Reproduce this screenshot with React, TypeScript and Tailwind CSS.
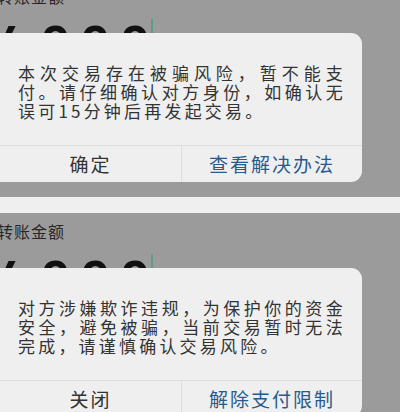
import React from 'react';

type Notice = {
  lines: string[];
  cancel: string;
  action: string;
};

const notices: Notice[] = [
  {
    lines: ['本次交易存在被骗风险，暂不能支', '付。请仔细确认对方身份，如确认无', '误可15分钟后再发起交易。'],
    cancel: '确定',
    action: '查看解决办法',
  },
  {
    lines: ['对方涉嫌欺诈违规，为保护你的资金', '安全，避免被骗，当前交易暂时无法', '完成，请谨慎确认交易风险。'],
    cancel: '关闭',
    action: '解除支付限制',
  },
];

const RiskDialog: React.FC<{ notice: Notice }> = ({ notice }) => {
  return (
    <div className="absolute left-0 top-[55px] w-[362px] rounded-r-[11px] bg-[#efefef]">
      <div className="pl-[18px] pt-[30px] pb-[25px] text-[17px] leading-[19px] tracking-[3.2px] text-[#333333]">
        {notice.lines.map((line, i) => (
          <div
            key={i}
            className={i < notice.lines.length - 1 ? 'w-[328px] [text-align-last:justify]' : ''}
          >
            {line}
          </div>
        ))}
      </div>
      <div className="flex h-[37px] border-t border-[#dddddd] text-[19px] tracking-[2px]">
        <button className="flex w-[182px] items-center justify-center border-r border-[#dddddd] text-[#333333]">
          {notice.cancel}
        </button>
        <button className="flex flex-1 items-center justify-center text-[#285a8e]">
          {notice.action}
        </button>
      </div>
    </div>
  );
};

// transfer page dimmed behind the dialog
const PayPanel: React.FC<{ notice: Notice; outer: string; inner: string }> = ({ notice, outer, inner }) => {
  return (
    <div className={`overflow-hidden ${outer}`}>
      <div className={`relative h-[240px] bg-[#9b9b9b] ${inner}`}>
        <div className="-ml-[3px] pt-[8px] text-[16px] leading-[20px] tracking-[1px] text-[#262626]">转账金额</div>
        <div className="mt-[13px] flex items-start font-['Liberation_Sans',sans-serif] font-bold text-[#111111]">
          <span className="-ml-[12px] w-[54px] text-[50px] leading-none">¥</span>
          <span className="w-[109px] text-[50px] leading-none tracking-[12px]">999</span>
          <span className="h-[30px] w-[2px] bg-[#5e9c84]" />
        </div>
        <RiskDialog notice={notice} />
      </div>
    </div>
  );
};

export default function App() {
  return (
    <div className="h-[412px] w-[400px] overflow-hidden bg-[#efefef] font-['Noto_Sans_CJK_SC','Noto_Sans',sans-serif]">
      <PayPanel notice={notices[0]} outer="h-[197px]" inner="-mt-[22px]" />
      <div className="h-[16px] bg-[#efefef]" />
      <PayPanel notice={notices[1]} outer="h-[199px]" inner="" />
    </div>
  );
}
